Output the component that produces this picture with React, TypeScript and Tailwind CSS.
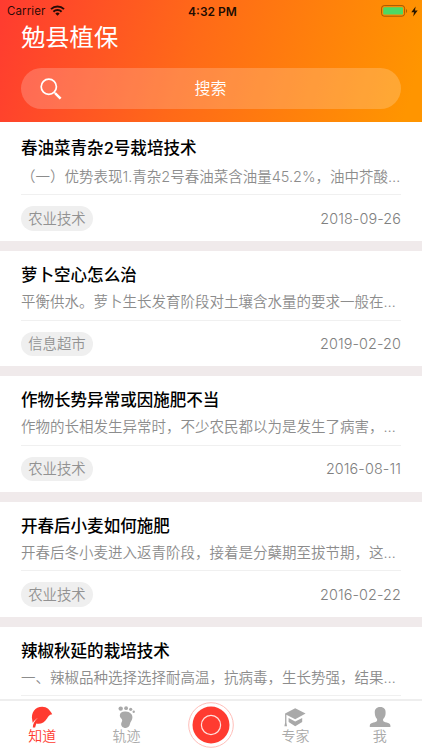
import type { ReactNode } from "react";

interface Article {
  title: string;
  excerpt: string;
  tag: string;
  date: string;
}

const articles: Article[] = [
  {
    title: "春油菜青杂2号栽培技术",
    excerpt: "（一）优势表现1.青杂2号春油菜含油量45.2%，油中芥酸…",
    tag: "农业技术",
    date: "2018-09-26",
  },
  {
    title: "萝卜空心怎么治",
    excerpt: "平衡供水。萝卜生长发育阶段对土壤含水量的要求一般在…",
    tag: "信息超市",
    date: "2019-02-20",
  },
  {
    title: "作物长势异常或因施肥不当",
    excerpt: "作物的长相发生异常时，不少农民都以为是发生了病害，…",
    tag: "农业技术",
    date: "2016-08-11",
  },
  {
    title: "开春后小麦如何施肥",
    excerpt: "开春后冬小麦进入返青阶段，接着是分蘖期至拔节期，这…",
    tag: "农业技术",
    date: "2016-02-22",
  },
];

const lastArticle = {
  title: "辣椒秋延的栽培技术",
  excerpt: "一、辣椒品种选择选择耐高温，抗病毒，生长势强，结果…",
};

function StatusBar() {
  return (
    <div className="grid h-[22px] grid-cols-3 items-center pl-[7px] pr-[4px] text-[11.5px] text-black/85">
      <div className="flex items-center gap-[5px] pt-px">
        <span className="tracking-[0.1px]">Carrier</span>
        <svg width="15" height="11" viewBox="0 0 15 11" fill="none" stroke="currentColor" strokeWidth="2" className="-mt-[2px]">
          <path d="M1 4.1a9.4 9.4 0 0 1 13 0" />
          <path d="M3.4 6.7a5.9 5.9 0 0 1 8.2 0" />
          <path d="M7.5 10.8 5.3 8.6a3.2 3.2 0 0 1 4.4 0z" fill="currentColor" stroke="none" />
        </svg>
      </div>
      <span className="pt-px text-center text-[12px] font-semibold text-black/90">4:32 PM</span>
      <div className="flex items-center justify-end gap-[3px]">
        <svg width="27" height="12" viewBox="0 0 27 12">
          <rect x="0.6" y="0.6" width="23" height="10.6" rx="2.6" fill="none" stroke="#8a4a00" strokeOpacity="0.75" />
          <rect x="2.2" y="2.2" width="19.8" height="7.4" rx="1.2" fill="#4cd964" />
          <path d="M25 4v4c1.4-.5 1.4-3.5 0-4z" fill="#8a4a00" fillOpacity="0.75" />
        </svg>
        <svg width="7" height="11" viewBox="0 0 7 11" fill="currentColor">
          <path d="M4.6.5.3 6.2H3l-.8 4.3 4.5-6H4z" />
        </svg>
      </div>
    </div>
  );
}

function Header() {
  return (
    <header className="h-[122.3px] shrink-0 bg-[linear-gradient(106deg,#ff3b30_0%,#ff6a18_45%,#ff9500_96%)]">
      <StatusBar />
      <div className="px-[21px]">
        <h1 className="h-[46px] text-[24.3px] leading-[31px] font-normal text-white">勉县植保</h1>
        <div className="flex h-[41px] items-center rounded-full bg-white/20 pl-[19px] text-white">
          <svg width="22" height="22" viewBox="0 0 22 22" fill="none" stroke="currentColor">
            <circle cx="8.8" cy="8.8" r="7.6" strokeWidth="1.7" />
            <path d="m14.2 14.2 1.8 1.8" strokeWidth="1.500" />
            <path d="m15.3 15.3 5.3 5.3" strokeWidth="2.5" />
          </svg>
          <span className="flex-1 pr-[42px] pb-px text-center text-[16px] font-[350]">搜索</span>
        </div>
      </div>
    </header>
  );
}

function ArticleText({ title, excerpt }: { title: string; excerpt: string }) {
  return (
    <>
      <h2 className="h-[27px] text-[16.55px] leading-[24px] font-medium whitespace-nowrap text-black">
        {title}
      </h2>
      <p className="h-[30.5px] border-b border-[#f0f0f0] text-[14.5px] leading-[24px] font-[350] whitespace-nowrap text-[#8c8c8c]">
        {excerpt}
      </p>
    </>
  );
}

function ArticleCard({ article }: { article: Article }) {
  return (
    <li className="h-[115.3px] shrink-0 bg-white px-[21px] pt-[12px] first:h-[118.8px] first:pt-[14px] first:[&>p]:h-[32px] first:[&>p]:pt-[1.5px]">
      <ArticleText title={article.title} excerpt={article.excerpt} />
      <div className="flex items-center justify-between pt-[11px] text-[14.4px] font-[350] text-[#929292]">
        <span className="flex h-[24.5px] items-center rounded-full bg-[#efefef] px-[7.2px]">{article.tag}</span>
        <span className="font-light tracking-[0.1px] text-[#808080]">{article.date}</span>
      </div>
    </li>
  );
}

function Tab({ label, active, children }: { label: string; active?: boolean; children: ReactNode }) {
  return (
    <button
      type="button"
      className={`flex flex-1 flex-col items-center pt-[5px] text-[14px] leading-[20px] font-[350] ${
        active ? "text-[#ff3b30]" : "text-[#a9a9a9]"
      }`}
    >
      <svg width="24" height="22" viewBox="0 0 24 22" fill="currentColor" className="-mb-[2px] shrink-0">
        {children}
      </svg>
      <span>{label}</span>
    </button>
  );
}

function TabBar() {
  return (
    <nav className="flex h-[51px] shrink-0 border-t-2 border-[#eee] bg-white">
      <Tab label="知道" active>
        <path d="M2.300 14.300C.7 7 5 .8 12.200.8c5 0 7.500 3 10 7.400-3 .3-3.800 2-5.200 4.300-2.500 4.200-6.200 5.800-10.700 5l-1.200 3.900H2.800c.1-3.400 1.700-6.400 5.100-9.600-2.400 1.500-4.200 3.200-5 5.200-.3-.9-.5-1.700-.6-2.700z" />
      </Tab>
      <Tab label="轨迹">
        <circle cx="5.700" cy="2.600" r="2.200" />
        <circle cx="11.100" cy="2.200" r="1.900" />
        <circle cx="15.700" cy="3.300" r="1.600" />
        <circle cx="18.700" cy="5.700" r="1.200" />
        <path d="M4.800 9.500c0-2.900 2.600-4.200 6-3.900 4.100.3 6.900 2.700 6.600 6.200-.2 2.700-2 3.900-2.400 6-.4 2.600-2 4.200-4.500 4.100-2.700-.1-4.700-1.900-4.300-4.500.2-1.400 1.500-2.600.8-4C6.200 12 4.800 11.500 4.800 9.500z" />
      </Tab>
      <div className="flex flex-1 justify-center">
        <svg width="46" height="46" viewBox="0 0 46 46" className="mt-[1px]">
          <circle cx="23" cy="23" r="22.3" fill="none" stroke="#ffb5b0" strokeWidth="0.9" />
          <circle cx="23" cy="23" r="18.5" fill="#ff3b30" />
          <circle cx="23" cy="23" r="9.600" fill="none" stroke="#ffe0dd" strokeWidth="1.2" />
        </svg>
      </div>
      <Tab label="专家">
        <path d="M12.200 2.300 22.600 7.600 12.200 13.200 3.400 8.800v7.700l.6 3.800H1.400l.7-3.800V7.600z" />
        <path d="m5.600 12 6.600 3.500L19.200 12v4.100l-7 4.200-6.600-4.200z" />
      </Tab>
      <Tab label="我">
        <path d="M12.200 1c3.900 0 5.700 2.400 5.400 5.900 0 2.700-1 4.900-2.500 6.200v1.500c0 2.100 7.300 1.800 7.300 4.800v1.700H1.800v-1.700c0-3 7.300-2.700 7.300-4.800v-1.500C7.700 11.800 6.900 9.600 6.800 6.900 6.500 3.400 8.300 1 12.200 1z" />
      </Tab>
    </nav>
  );
}

export default function App() {
  return (
    <div className="flex h-[750px] w-[422px] flex-col overflow-hidden bg-white font-[Inter,'Noto_Sans_CJK_SC',sans-serif]">
      <Header />
      <main className="min-h-0 flex-1 overflow-hidden">
        <ul className="flex flex-col gap-[10px] bg-[#f0eaeb]">
          {articles.map((article) => (
            <ArticleCard key={article.title} article={article} />
          ))}
          <li className="h-[80px] bg-white px-[21px] pt-[12px]">
            <ArticleText title={lastArticle.title} excerpt={lastArticle.excerpt} />
          </li>
        </ul>
      </main>
      <TabBar />
    </div>
  );
}
